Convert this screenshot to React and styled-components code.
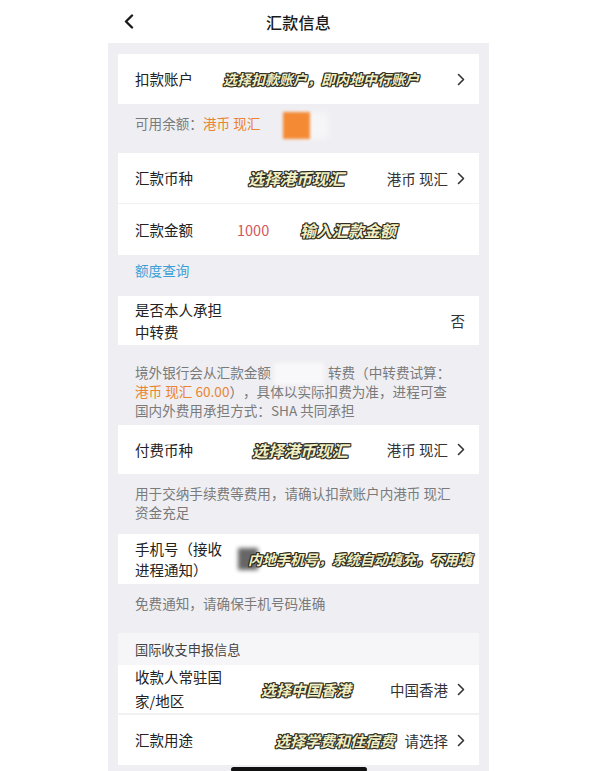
import React from 'react'
import styled, { createGlobalStyle } from 'styled-components'

const GlobalStyle = createGlobalStyle`
    *, *::before, *::after {
        box-sizing: border-box;
    }
    html, body {
        margin: 0;
        padding: 0;
        background: #ffffff;
    }
    body {
        font-family: "Noto Sans CJK SC", "Noto Sans", "Liberation Sans", sans-serif;
        color: #222;
        text-spacing-trim: space-all;
    }
`

const Screen = styled.div`
    width: 381px;
    margin-left: 108px;
    display: flex;
    flex-direction: column;
`

const Header = styled.div`
    height: 43px;
    display: grid;
    grid-template-columns: 1fr auto 1fr;
    align-items: center;
    background: #fff;
    padding: 0 16px;
`

const Title = styled.div`
    font-size: 16px;
    font-weight: 500;
    color: #1a1a1a;
    letter-spacing: 0.3px;
`

const Panel = styled.div`
    background: #efeff3;
    padding: 11px 10px 0;
    display: flex;
    flex-direction: column;
`

const Card = styled.div`
    background: #fff;
    display: flex;
    flex-direction: column;
`

const Divider = styled.div`
    height: ${p => p.$h || 1}px;
    background: #f1f1f4;
`

const Row = styled.div`
    position: relative;
    display: flex;
    align-items: center;
    height: ${p => p.$h || 50}px;
    padding: 0 14px 0 17px;
`

const Label = styled.div`
    font-size: 14.5px;
    line-height: ${p => p.$lh || 22}px;
    color: #222;
    white-space: nowrap;
    width: ${p => p.$w ? `${p.$w}px` : 'auto'};
    flex-shrink: 0;
`

const Amount = styled.div`
    font-size: 14.5px;
    color: #d6545c;
`

const Value = styled.div`
    margin-left: auto;
    display: flex;
    align-items: center;
    gap: 9px;
    font-size: 14.5px;
    color: #333;
    white-space: nowrap;
`

const Note = styled.div`
    height: ${p => p.$h ? `${p.$h}px` : 'auto'};
    padding: ${p => p.$pt}px 17px ${p => p.$pb}px;
    font-size: 13.6px;
    line-height: ${p => p.$lh || 19}px;
    color: #7a7a7a;
    white-space: nowrap;
`

const Orange = styled.span`
    color: #ea8430;
`

const Link = styled.span`
    color: #3a9fd6;
`

const OrangeSmudge = styled.span`
    display: inline-block;
    vertical-align: middle;
    width: 27px;
    height: 27px;
    margin: -4px 0 -4px 23px;
    background: #f58a35;
    filter: blur(1.5px);
    box-shadow: 18px 0 6px #f6f6f8;
`

const WhiteSmudge = styled.span`
    display: inline-block;
    vertical-align: middle;
    width: 50px;
    height: 22px;
    margin: -3px 4px -3px 3px;
    background: #f8f8fa;
    filter: blur(2px);
`

const SectionHead = styled.div`
    background: #f6f6f8;
    height: 32px;
    display: flex;
    align-items: center;
    padding: 0 17px;
    font-size: 13.2px;
    color: #444;
`

const Sticker = styled.div`
    position: absolute;
    left: ${p => p.$left}px;
    top: 50%;
    transform: translateY(-50%);
    font-size: ${p => p.$size || 15}px;
    font-weight: 700;
    font-style: italic;
    color: #f2efc2;
    white-space: nowrap;
    text-shadow:
        1px 1px 0 #2c2c22, -1px -1px 0 #2c2c22,
        1px -1px 0 #2c2c22, -1px 1px 0 #2c2c22,
        0 1px 0 #2c2c22, 0 -1px 0 #2c2c22,
        1px 0 0 #2c2c22, -1px 0 0 #2c2c22;
`

const PhoneSmudge = styled.div`
    position: absolute;
    left: 120px;
    top: 50%;
    transform: translateY(-50%);
    width: 20px;
    height: 22px;
    background: #666;
    filter: blur(2px);
`

const HomeBar = styled.div`
    align-self: center;
    width: 136px;
    height: 5px;
    margin-top: 2px;
    border-radius: 3px;
    background: #111;
`

const Chevron = () => (
    <svg width="8" height="13" viewBox="0 0 8 13">
        <polyline points="1.5,1.5 6.5,6.5 1.5,11.5" fill="none" stroke="#333" strokeWidth="1.6" strokeLinecap="round" strokeLinejoin="round" />
    </svg>
)

const BackIcon = () => (
    <svg width="10" height="15" viewBox="0 0 10 15">
        <polyline points="8,1.5 2,7.5 8,13.5" fill="none" stroke="#1a1a1a" strokeWidth="2.4" strokeLinecap="round" strokeLinejoin="round" />
    </svg>
)

const App = () => {
    return (
        <Screen>
            <GlobalStyle />
            <Header>
                <BackIcon />
                <Title>汇款信息</Title>
                <span />
            </Header>

            <Panel>
                <Card>
                    <Row>
                        <Label>扣款账户</Label>
                        <Sticker $left={105} $size={14}>选择扣款账户，即内地中行账户</Sticker>
                        <Value><Chevron /></Value>
                    </Row>
                </Card>
                <Note $h={49} $pt={9} $pb={0} $lh={20}>
                    可用余额：<Orange>港币 现汇</Orange><OrangeSmudge />
                </Note>

                <Card>
                    <Row>
                        <Label>汇款币种</Label>
                        <Sticker $left={130} $size={16}>选择港币现汇</Sticker>
                        <Value>港币 现汇<Chevron /></Value>
                    </Row>
                    <Divider />
                    <Row $h={51}>
                        <Label $w={102}>汇款金额</Label>
                        <Amount>1000</Amount>
                        <Sticker $left={182} $size={16}>输入汇款金额</Sticker>
                    </Row>
                </Card>
                <Note $h={41} $pt={5} $pb={0} $lh={20}>
                    <Link>额度查询</Link>
                </Note>

                <Card>
                    <Row $h={49}>
                        <Label>是否本人承担<br />中转费</Label>
                        <Value>否</Value>
                    </Row>
                </Card>
                <Note $h={80} $pt={18} $pb={0}>
                    境外银行会从汇款金额<WhiteSmudge />转费（中转费试算：<br />
                    <Orange>港币 现汇 60.00</Orange>），具体以实际扣费为准，进程可查<br />
                    国内外费用承担方式：SHA 共同承担
                </Note>

                <Card>
                    <Row $h={49}>
                        <Label>付费币种</Label>
                        <Sticker $left={134} $size={16}>选择港币现汇</Sticker>
                        <Value>港币 现汇<Chevron /></Value>
                    </Row>
                </Card>
                <Note $h={60} $pt={10} $pb={0}>
                    用于交纳手续费等费用，请确认扣款账户内港币 现汇<br />
                    资金充足
                </Note>

                <Card>
                    <Row>
                        <Label $lh={21}>手机号（接收<br />进程通知）</Label>
                        <PhoneSmudge />
                        <Sticker $left={130} $size={14}>内地手机号，系统自动填充，不用填</Sticker>
                    </Row>
                </Card>
                <Note $h={49} $pt={10} $pb={0}>
                    免费通知，请确保手机号码准确
                </Note>

                <SectionHead>国际收支申报信息</SectionHead>
                <Card>
                    <Row $h={48}>
                        <Label $lh={24}>收款人常驻国<br />家/地区</Label>
                        <Sticker $left={143} $size={15}>选择中国香港</Sticker>
                        <Value>中国香港<Chevron /></Value>
                    </Row>
                    <Divider $h={2} />
                    <Row>
                        <Label>汇款用途</Label>
                        <Sticker $left={157} $size={15}>选择学费和住宿费</Sticker>
                        <Value>请选择<Chevron /></Value>
                    </Row>
                </Card>
                <HomeBar />
            </Panel>
        </Screen>
    )
}

export default App
